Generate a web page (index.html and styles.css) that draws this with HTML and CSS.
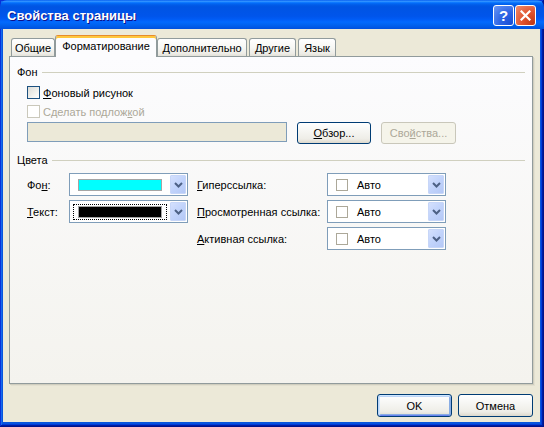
FILE: index.html
```html
<!DOCTYPE html>
<html lang="ru">
<head>
<meta charset="utf-8">
<title>Свойства страницы</title>
<link rel="stylesheet" href="styles.css">
</head>
<body>
<div class="window">
  <div class="titlebar">
    <span class="title">Свойства страницы</span>
    <div class="caption-buttons">
      <span class="cap-btn help">?</span>
      <span class="cap-btn close">
        <svg width="11" height="11" viewBox="0 0 11 11"><path d="M1.5 1.5 L9.5 9.5 M9.5 1.5 L1.5 9.5" stroke="#fff" stroke-width="2.2" stroke-linecap="square"/></svg>
      </span>
    </div>
  </div>
  <div class="client">
    <div class="tabs">
      <div class="tab tab-general">Общие</div>
      <div class="tab tab-format selected">Форматирование</div>
      <div class="tab tab-extra">Дополнительно</div>
      <div class="tab tab-other">Другие</div>
      <div class="tab tab-lang">Язык</div>
    </div>
    <div class="panel">
      <div class="group-title"><span>Фон</span><i class="rule"></i></div>
      <div class="check-row"><span class="box"></span><span><u>Ф</u>оновый рисунок</span></div>
      <div class="check-row disabled"><span class="box"></span><span>Сделать подлож<u>к</u>ой</span></div>
      <div class="file-row">
        <div class="field"></div>
        <button class="btn browse"><u>О</u>бзор...</button>
        <button class="btn props" disabled>Сво<u>й</u>ства...</button>
      </div>
      <div class="group-title colors-title"><span>Цвета</span><i class="rule"></i></div>
      <div class="colors">
        <span class="lbl">Фо<u>н</u>:</span>
        <div class="combo">
          <div class="combo-value"><span class="focus-box"><span class="swatch cyan"></span></span></div>
          <span class="combo-btn"><svg width="9" height="6" viewBox="0 0 9 6"><path d="M1 1 L4.5 4.5 L8 1" fill="none" stroke="#4D6185" stroke-width="2"/></svg></span>
        </div>
        <span class="lbl lbl2"><u>Г</u>иперссылка:</span>
        <div class="combo">
          <div class="combo-value auto"><span class="mini"></span><span class="auto-text">Авто</span></div>
          <span class="combo-btn"><svg width="9" height="6" viewBox="0 0 9 6"><path d="M1 1 L4.5 4.5 L8 1" fill="none" stroke="#4D6185" stroke-width="2"/></svg></span>
        </div>

        <span class="lbl"><u>Т</u>екст:</span>
        <div class="combo">
          <div class="combo-value"><span class="focus-box focused"><span class="swatch black"></span></span></div>
          <span class="combo-btn"><svg width="9" height="6" viewBox="0 0 9 6"><path d="M1 1 L4.5 4.5 L8 1" fill="none" stroke="#4D6185" stroke-width="2"/></svg></span>
        </div>
        <span class="lbl lbl2"><u>П</u>росмотренная ссылка:</span>
        <div class="combo">
          <div class="combo-value auto"><span class="mini"></span><span class="auto-text">Авто</span></div>
          <span class="combo-btn"><svg width="9" height="6" viewBox="0 0 9 6"><path d="M1 1 L4.5 4.5 L8 1" fill="none" stroke="#4D6185" stroke-width="2"/></svg></span>
        </div>

        <span class="lbl lbl2 col3"><u>А</u>ктивная ссылка:</span>
        <div class="combo">
          <div class="combo-value auto"><span class="mini"></span><span class="auto-text">Авто</span></div>
          <span class="combo-btn"><svg width="9" height="6" viewBox="0 0 9 6"><path d="M1 1 L4.5 4.5 L8 1" fill="none" stroke="#4D6185" stroke-width="2"/></svg></span>
        </div>
      </div>
    </div>
    <div class="footer">
      <button class="btn default">OK</button>
      <button class="btn">Отмена</button>
    </div>
  </div>
</div>
</body>
</html>
```
FILE: styles.css
```css
html, body {
  margin: 0;
  padding: 0;
  background: #ffffff;
}
body {
  font-family: "Liberation Sans", Arial, sans-serif;
  font-size: 11px;
  color: #000;
}
u { text-decoration: underline; text-underline-offset: 1px; }

.window {
  width: 544px;
  height: 427px;
  box-sizing: border-box;
  display: flex;
  flex-direction: column;
  background: #ECE9D8;
  padding: 0 4px 5px 3px;
  box-shadow:
    inset -1px -1px #00138C,
    inset 1px 1px #0831D9,
    inset -2px -2px #001EA0,
    inset 2px 2px #166AEE,
    inset -3px -3px #003BDA,
    inset 3px 3px #0855DD,
    inset -4px -4px #0855DD,
    inset 0 -5px #0855DD;
}

.titlebar {
  flex: none;
  height: 29px;
  margin: 0 -4px 0 -3px;
  box-sizing: border-box;
  padding: 2px 8px 0 7px;
  display: flex;
  align-items: center;
  border-radius: 7px 7px 0 0;
  background: linear-gradient(to bottom,
    #0058EE 0%, #3593FF 4%, #288EFF 6%, #127DFF 8%, #036FFC 10%,
    #0262EE 14%, #0057E5 20%, #0054E3 24%, #0055EB 56%, #005BF5 66%,
    #026AFE 76%, #0062EF 86%, #0058E6 94%, #0050DC 100%);
}
.title {
  flex: 1;
  color: #fff;
  font-weight: bold;
  font-size: 13px;
  line-height: 21px;
  text-shadow: 1px 1px 0 #0F1089;
}
.caption-buttons {
  display: flex;
  gap: 1px;
}
.cap-btn {
  width: 21px;
  height: 21px;
  box-sizing: border-box;
  border: 1px solid #fff;
  border-radius: 3px;
  display: flex;
  align-items: center;
  justify-content: center;
  color: #fff;
}
.help {
  background: radial-gradient(circle at 90% 90%, #1A4FD6 0%, #2D64E4 45%, #6B97F5 100%);
  font-weight: bold;
  font-size: 15px;
  font-family: "Liberation Sans", Arial, sans-serif;
}
.close {
  background: radial-gradient(circle at 90% 90%, #C13A16 0%, #E0522E 45%, #F08E6E 100%);
}

.client {
  flex: 1;
  display: flex;
  flex-direction: column;
  padding: 6px 7px 5px 6px;
}

.tabs {
  flex: none;
  height: 21px;
  display: flex;
  align-items: flex-end;
  padding-left: 2px;
}
.tab {
  height: 18px;
  box-sizing: border-box;
  padding: 0;
  margin-right: 2px;
  border: 1px solid #919B9C;
  border-bottom: none;
  border-radius: 3px 3px 0 0;
  background: linear-gradient(to bottom, #FFFFFF 0%, #F7F7F4 50%, #EDECE6 85%, #E3E1D8 100%);
  display: flex;
  align-items: center;
  justify-content: center;
  white-space: nowrap;
}
.tab-general { width: 44px; }
.tab-format { width: 102px; }
.tab-extra { width: 90px; }
.tab-other { width: 47px; }
.tab-lang { width: 38px; }
.tab.selected {
  height: 22px;
  margin: 0 0 -1px -2px;
  padding: 0 0 2px;
  position: relative;
  z-index: 1;
  background: #FCFCFE;
  border-top: 1px solid #E68B2C;
  box-shadow: inset 0 2px 0 #FFC73C;
}

.panel {
  flex: 1;
  border: 1px solid #919B9C;
  background: linear-gradient(to bottom, #FCFCFE 0%, #F4F3EE 100%);
  box-shadow: 1px 1px 0 #D0CEBF, 2px 2px 0 #E3E0D0;
  padding: 9px 7px 0 7px;
  display: flex;
  flex-direction: column;
}

.group-title {
  display: flex;
  align-items: center;
  height: 13px;
  line-height: 13px;
}
.rule {
  flex: 1;
  height: 1px;
  background: #D0D0BF;
  margin-left: 4px;
}
.colors-title {
  margin-top: 10px;
}

.check-row {
  display: flex;
  align-items: center;
  gap: 3px;
  height: 19px;
  margin-left: 10px;
}
.group-title + .check-row { margin-top: 4px; }
.box {
  width: 13px;
  height: 13px;
  box-sizing: border-box;
  border: 1px solid #1C5180;
  background: linear-gradient(135deg, #DCDCD7 0%, #F2F2EE 60%, #FFFFFF 100%);
}
.check-row.disabled { color: #ACA899; }
.check-row.disabled .box {
  border-color: #CAC8BB;
  background: #FFFFFF;
}

.file-row {
  display: flex;
  align-items: flex-start;
  margin: 1px 0 0 10px;
}
.field {
  width: 260px;
  height: 20px;
  box-sizing: border-box;
  border: 1px solid #7F9DB9;
  background: #ECE9D8;
}

.btn {
  width: 75px;
  height: 23px;
  box-sizing: border-box;
  padding: 0;
  border: 1px solid #003C74;
  border-radius: 3px;
  background: linear-gradient(to bottom, #FFFFFF 0%, #F6F6F3 40%, #EEEDE7 80%, #DCD8CC 100%);
  font-family: "Liberation Sans", Arial, sans-serif;
  font-size: 11px;
  color: #000;
}
.browse { width: 74px; height: 22px; margin-left: 10px; }
.props { height: 22px; margin-left: 10px; }
.btn:disabled {
  border-color: #C9C7BA;
  background: #F5F4EA;
  color: #ACA899;
}
.btn.default {
  box-shadow: inset 0 1px 0 #CEE7FF, inset 1px 0 0 #BCD4F6, inset -1px 0 0 #89ADE4, inset 0 -1px 0 #6982EE,
              inset 0 2px 0 #BCD4F6, inset 2px 0 0 #CEE7FF, inset -2px 0 0 #89ADE4, inset 0 -2px 0 #89ADE4;
}

.colors {
  display: grid;
  grid-template-columns: 42px 119px 139px 119px;
  grid-auto-rows: 23px;
  row-gap: 4px;
  margin: 6px 0 0 10px;
  align-items: center;
}
.lbl { white-space: nowrap; }
.lbl2 { padding-left: 9px; }
.col3 { grid-column: 3; }

.combo {
  height: 23px;
  box-sizing: border-box;
  border: 1px solid #7F9DB9;
  background: #fff;
  padding: 1px;
  display: flex;
}
.combo-value {
  flex: 1;
  display: flex;
  align-items: center;
  padding-left: 2px;
}
.focus-box {
  display: flex;
  border: 1px dotted transparent;
  padding: 1px 4px;
}
.focus-box.focused { border-color: #000; }
.swatch {
  width: 84px;
  height: 12px;
  box-sizing: border-box;
  border: 1px solid #A5A5A5;
}
.cyan { background: #00FFFF; }
.black { background: #000000; }

.combo-value.auto { padding-left: 7px; }
.mini {
  width: 12px;
  height: 12px;
  box-sizing: border-box;
  border: 1px solid #ACA899;
  background: #fff;
}
.auto-text { margin-left: 9px; }

.combo-btn {
  width: 16px;
  box-sizing: border-box;
  border: 1px solid #C7D6F8;
  border-radius: 1px;
  background: linear-gradient(135deg, #D4E0FD 0%, #C1D3FB 50%, #B4C8F6 100%);
  display: flex;
  align-items: center;
  justify-content: center;
}

.footer {
  flex: none;
  display: flex;
  justify-content: flex-end;
  gap: 6px;
  margin-top: 10px;
  height: 23px;
}
```
